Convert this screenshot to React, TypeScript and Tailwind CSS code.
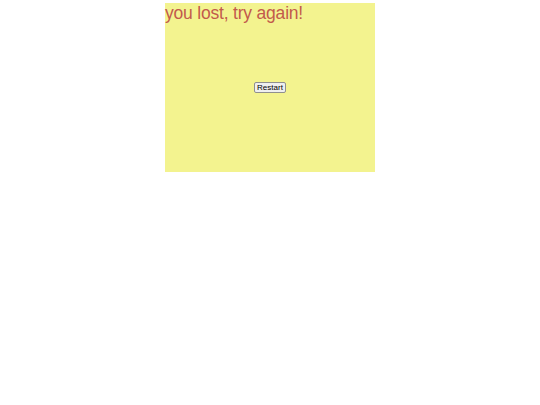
export default function App() {
  return (
    <div className="pt-[3px]">
      <div className="relative mx-auto flex h-[169px] w-[210px] items-center justify-center bg-[#f3f38f] font-['Liberation_Sans',Arial,sans-serif]">
        <h1 className="absolute left-0 top-0 text-[17.5px] leading-[20px] tracking-[-0.2px] text-[#c25a4c]">you lost, try again!</h1>
        <button className="rounded-[2px] border border-[#8f8f8f] bg-[#efefef] px-[2px] text-[8px] leading-[9px] text-black">
          Restart
        </button>
      </div>
    </div>
  );
}
